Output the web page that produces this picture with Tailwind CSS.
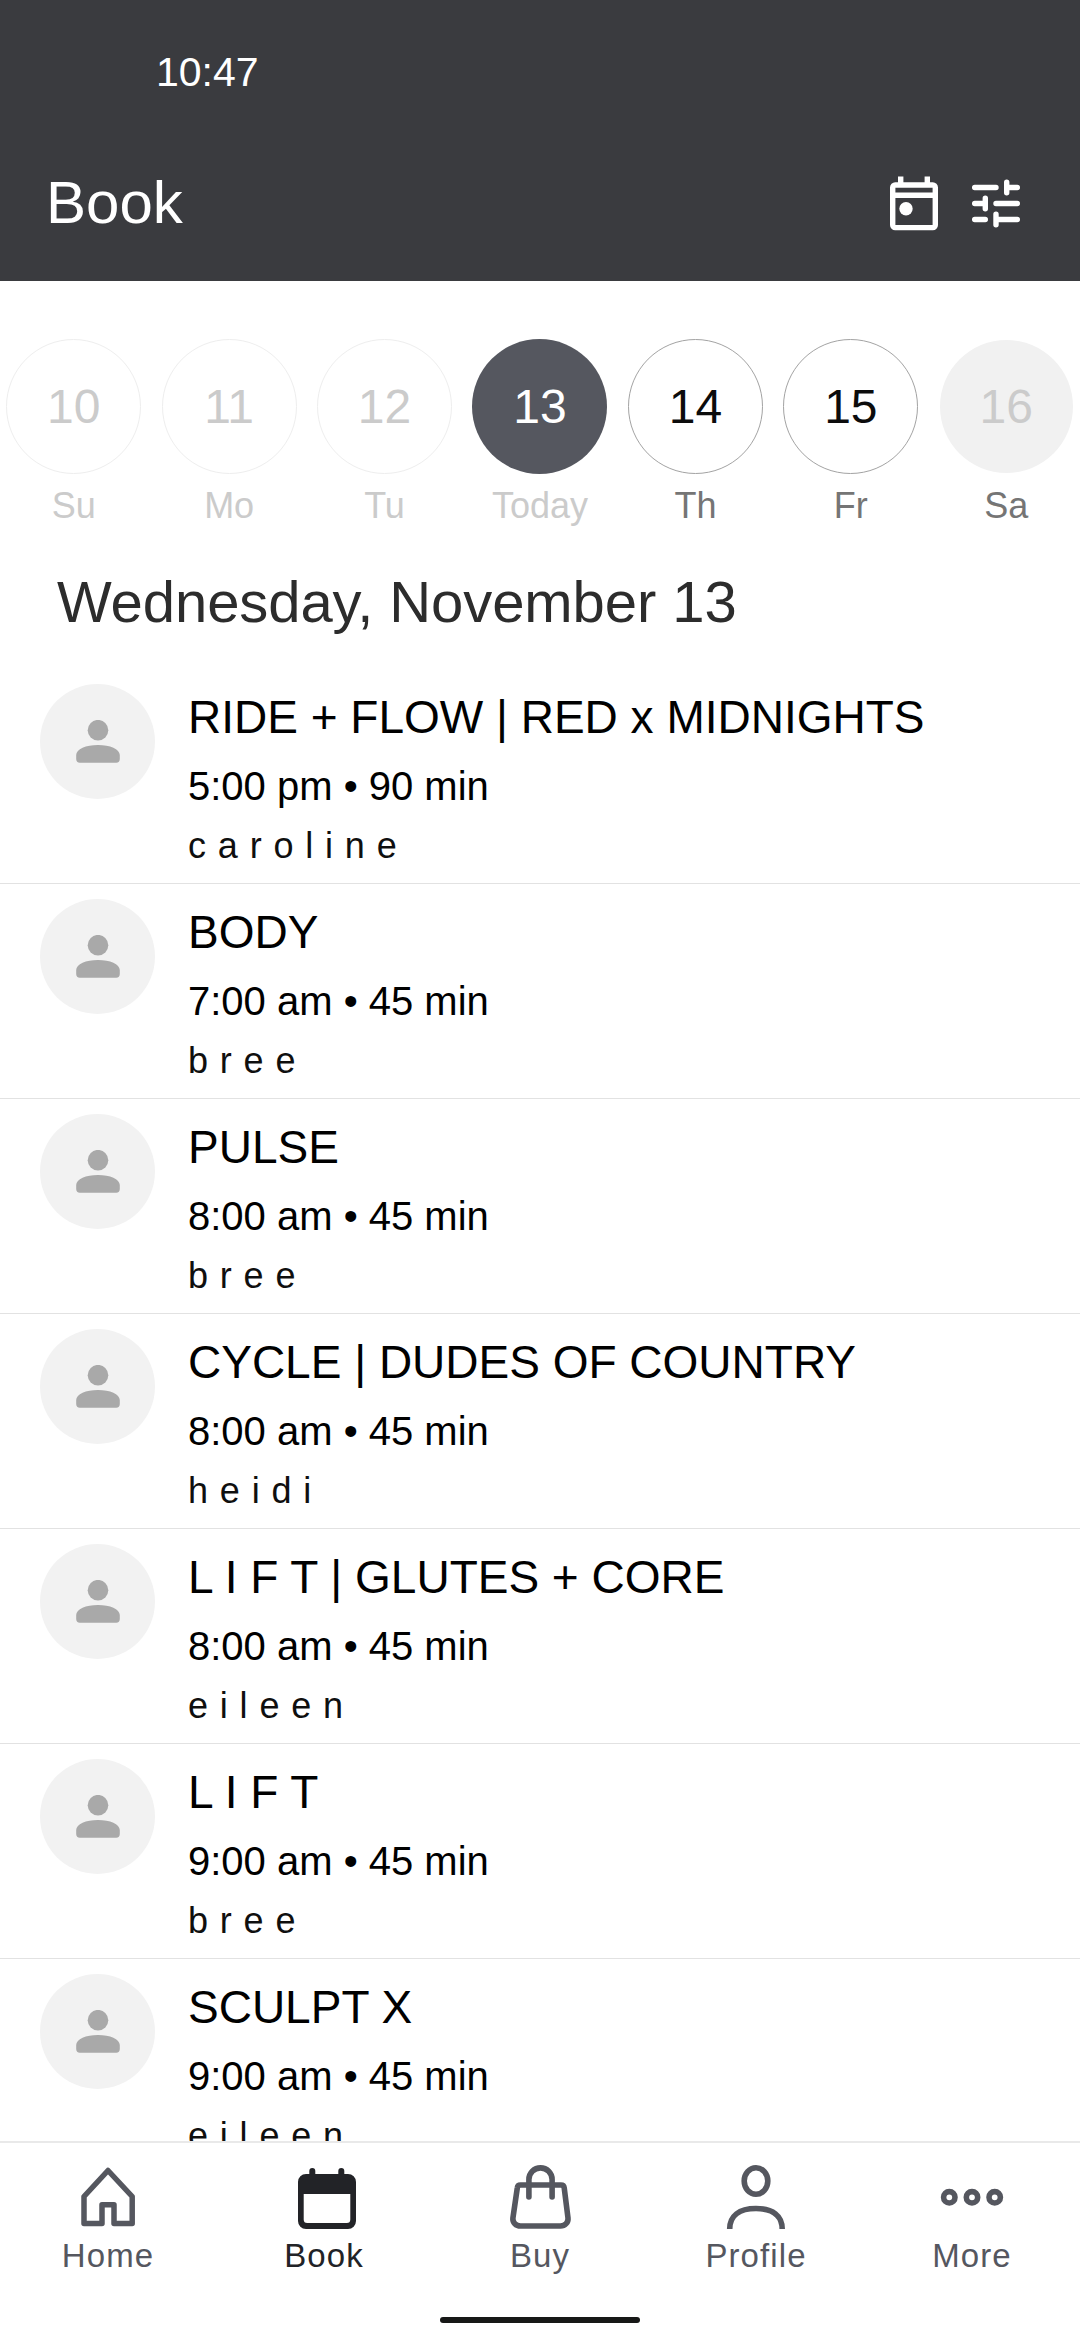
<!DOCTYPE html>
<html lang="en">
  <head>
    <meta charset="UTF-8" />
    <meta name="viewport" content="width=device-width, initial-scale=1.0" />
    <title>Book</title>
    <script src="https://cdn.jsdelivr.net/npm/@tailwindcss/browser@4"></script>
  </head>
  <body
    class="flex flex-col w-[1080px] h-[2340px] overflow-hidden bg-white font-['Liberation_Sans',Arial,sans-serif]"
  >
    <!-- Header -->
    <header class="shrink-0 bg-[#3a3b3f] text-white">
      <div class="flex items-center h-[124px] pt-[21px] pl-[156px] text-[41px]">
        10:47
      </div>
      <div class="flex items-center justify-between h-[157px] pl-[46px] pr-[52px]">
        <h1 class="text-[60px]">Book</h1>
        <div class="flex items-center gap-[18px]">
          <svg class="size-16" viewBox="0 0 64 64" fill="none" stroke="currentColor" stroke-width="5.4">
            <path d="M18.7 5.5v8M45.3 5.5v8" />
            <rect x="10.7" y="14" width="42.6" height="42.6" rx="2.5" />
            <path d="M10.7 24.3h42.6" />
            <circle cx="24" cy="37.7" r="6.7" fill="currentColor" stroke="none" />
          </svg>
          <svg class="size-16" viewBox="0 0 64 64" fill="none" stroke="currentColor" stroke-width="5.4" stroke-linecap="round">
            <path d="M10.7 16.5h21.3M42.7 11.2v10.6M42.7 16.5h10.6" />
            <path d="M10.7 32.5h10.6M21.3 27.2v10.6M32 32.5h21.3" />
            <path d="M10.7 48.5h10.6M32 43.2v10.6M32 48.5h21.3" />
          </svg>
        </div>
      </div>
    </header>

    <!-- Days -->
    <section class="shrink-0 pt-[58px] -mx-[4px] grid grid-cols-7 text-[36px] leading-[54px] text-center text-[#cbcbcb]">
      <div class="flex flex-col items-center">
        <div class="size-[135px] rounded-full border border-[#eeeeee] flex items-center justify-center text-[48px]">10</div>
        <span class="mt-[5px]">Su</span>
      </div>
      <div class="flex flex-col items-center">
        <div class="size-[135px] rounded-full border border-[#eeeeee] flex items-center justify-center text-[48px]">11</div>
        <span class="mt-[5px]">Mo</span>
      </div>
      <div class="flex flex-col items-center">
        <div class="size-[135px] rounded-full border border-[#eeeeee] flex items-center justify-center text-[48px]">12</div>
        <span class="mt-[5px]">Tu</span>
      </div>
      <div class="flex flex-col items-center">
        <div class="size-[135px] rounded-full bg-[#55575f] flex items-center justify-center text-[48px] text-white">13</div>
        <span class="mt-[5px]">Today</span>
      </div>
      <div class="flex flex-col items-center">
        <div class="size-[135px] rounded-full border border-[#a3a3a3] flex items-center justify-center text-[48px] text-[#0c0c0c]">14</div>
        <span class="mt-[5px] text-[#757575]">Th</span>
      </div>
      <div class="flex flex-col items-center">
        <div class="size-[135px] rounded-full border border-[#a3a3a3] flex items-center justify-center text-[48px] text-[#0c0c0c]">15</div>
        <span class="mt-[5px] text-[#757575]">Fr</span>
      </div>
      <div class="flex flex-col items-center">
        <div class="size-[133px] my-px rounded-full bg-[#f1f1f1] flex items-center justify-center text-[48px]">16</div>
        <span class="mt-[5px] text-[#757575]">Sa</span>
      </div>
    </section>

    <h2 class="shrink-0 flex items-center h-[136px] pl-[57px] text-[58px] tracking-[-0.08px] text-[#2c2c2c]">
      Wednesday, November 13
    </h2>

    <!-- Classes -->
    <main id="classes" class="flex-1 min-h-0 overflow-hidden"></main>

    <!-- Bottom navigation -->
    <nav class="shrink-0 h-[199px] border-t-2 border-[#e9e9e9] flex flex-col items-center justify-between pt-[22px] pb-[17px] bg-white">
      <div class="w-full grid grid-cols-5 text-[33px] leading-[44px] tracking-[1.1px] text-[#55575f]">
        <div class="flex flex-col items-center">
          <svg class="size-16" viewBox="0 0 64 64" fill="none" stroke="currentColor" stroke-width="5.5" stroke-linejoin="round">
            <path d="M8 58.5V31.5L32 5.5l24.2 26v27H38V39.8H26v18.7z" />
          </svg>
          <span class="mt-[5px]">Home</span>
        </div>
        <div class="flex flex-col items-center text-[#222327]">
          <svg class="size-16" viewBox="0 0 64 64" fill="currentColor">
            <path d="M20.3 6v6M49.3 6v6" stroke="currentColor" stroke-width="6" stroke-linecap="round" />
            <path fill-rule="evenodd" d="M14 9h42a8 8 0 0 1 8 8v39a8 8 0 0 1-8 8H14a8 8 0 0 1-8-8V17a8 8 0 0 1 8-8zM11.7 29v25.5a3.5 3.5 0 0 0 3.5 3.5h39.6a3.5 3.5 0 0 0 3.5-3.5V29z" />
          </svg>
          <span class="mt-[5px]">Book</span>
        </div>
        <div class="flex flex-col items-center">
          <svg class="size-16" viewBox="0 0 64 64" fill="none" stroke="currentColor" stroke-width="5.6" stroke-linecap="round">
            <path d="M12.5 20h40.5c1.8 0 3 1 3.2 2.8L60 53c.5 4.5-3 8-7.5 8H12.5C8 61 4.400 57.5 4.900 53l4.4-30.2C9.500 21 10.7 20 12.5 20z" />
            <path d="M20.9 32V14.5a11.6 11.6 0 0 1 23.2 0V32" />
          </svg>
          <span class="mt-[5px]">Buy</span>
        </div>
        <div class="flex flex-col items-center">
          <svg class="size-16" viewBox="0 0 64 64" fill="none" stroke="currentColor" stroke-width="5.6">
            <ellipse cx="32" cy="16" rx="11.8" ry="13.2" />
            <path d="M5.7 64C5.7 51 15 43.5 32 43.5S58.2 51 58.2 64" />
          </svg>
          <span class="mt-[5px]">Profile</span>
        </div>
        <div class="flex flex-col items-center">
          <svg class="size-16" viewBox="0 0 64 64" fill="none" stroke="currentColor" stroke-width="5.6">
            <circle cx="9.3" cy="32.3" r="5.7" />
            <circle cx="32" cy="32.3" r="5.7" />
            <circle cx="54.7" cy="32.3" r="5.7" />
          </svg>
          <span class="mt-[5px]">More</span>
        </div>
      </div>
      <div class="w-[200px] h-[6px] rounded-full bg-[#171817]"></div>
    </nav>

    <script>
      const classes = [
        ["RIDE + FLOW | RED x MIDNIGHTS", "5:00 pm • 90 min", "c a r o l i n e"],
        ["BODY", "7:00 am • 45 min", "b r e e"],
        ["PULSE", "8:00 am • 45 min", "b r e e"],
        ["CYCLE | DUDES OF COUNTRY", "8:00 am • 45 min", "h e i d i"],
        ["L I F T | GLUTES + CORE", "8:00 am • 45 min", "e i l e e n"],
        ["L I F T", "9:00 am • 45 min", "b r e e"],
        ["SCULPT X", "9:00 am • 45 min", "e i l e e n"],
      ];

      document.getElementById("classes").innerHTML = classes
        .map(
          ([title, time, coach]) => `
        <article class="flex h-[215px] pl-[40px] border-b border-[#e2e2e2]">
          <div class="mt-[15px] size-[115px] shrink-0 rounded-full bg-[#f2f2f2] flex items-center justify-center">
            <svg class="size-[44px]" viewBox="0 0 44 44" fill="#a9a9a9">
              <circle cx="22" cy="10.2" r="10.3" />
              <path d="M0.2 35C0.2 29 10 24.9 22 24.9S43.8 29 43.8 35V39a3.7 3.7 0 0 1-3.7 3.7H3.9A3.7 3.7 0 0 1 0.2 39z" />
            </svg>
          </div>
          <div class="ml-[33px] pt-[18px] whitespace-nowrap text-black">
            <h3 class="text-[46px] leading-[60px]">${title}</h3>
            <p class="mt-[9px] text-[40px] leading-[60px]">${time}</p>
            <p class="mt-[5px] text-[36px] leading-[50px] tracking-[0.9px] text-[#0f0f0f]">${coach}</p>
          </div>
        </article>`
        )
        .join("");
    </script>
  </body>
</html>
